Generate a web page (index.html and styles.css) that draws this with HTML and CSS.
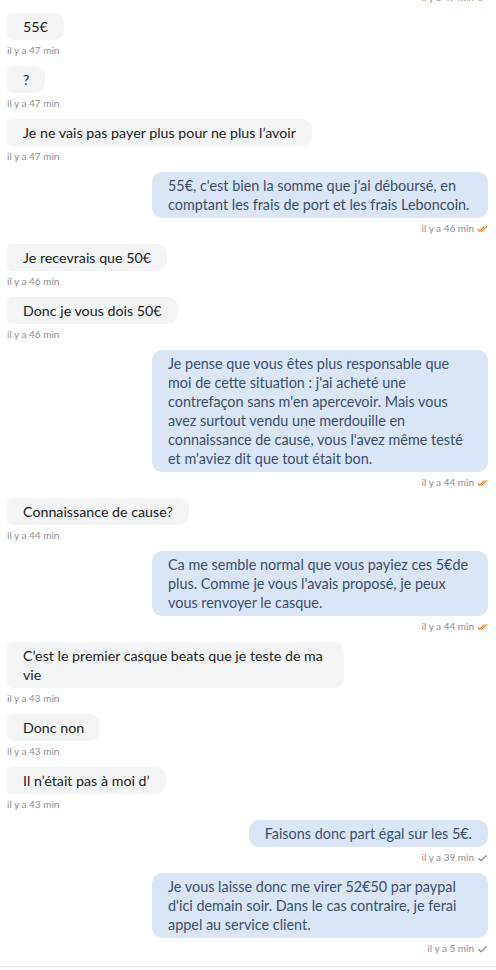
FILE: index.html
```html
<!DOCTYPE html>
<html lang="fr">
<head>
<meta charset="utf-8">
<link rel="stylesheet" href="styles.css">
</head>
<body>
<div class="chat">
  <div class="msg out first">
    <div class="meta">il y a 47 min <svg class="tick read" viewBox="0 0 12 8"><path d="M1 4.5 L3 6.5 L7.5 1.5 M5 6.5 L10.5 1.5"/></svg></div>
  </div>

  <div class="msg in"><div class="bubble">55€</div><div class="meta">il y a 47 min</div></div>
  <div class="msg in"><div class="bubble">?</div><div class="meta">il y a 47 min</div></div>
  <div class="msg in"><div class="bubble">Je ne vais pas payer plus pour ne plus l’avoir</div><div class="meta">il y a 47 min</div></div>

  <div class="msg out"><div class="bubble full">55€, c'est bien la somme que j'ai déboursé, en<br>comptant les frais de port et les frais Leboncoin.</div>
    <div class="meta">il y a 46 min <svg class="tick read" viewBox="0 0 12 8"><path d="M1 4.5 L3 6.5 L7.5 1.5 M5 6.5 L10.5 1.5"/></svg></div></div>

  <div class="msg in"><div class="bubble">Je recevrais que 50€</div><div class="meta">il y a 46 min</div></div>
  <div class="msg in"><div class="bubble">Donc je vous dois 50€</div><div class="meta">il y a 46 min</div></div>

  <div class="msg out"><div class="bubble full">Je pense que vous êtes plus responsable que<br>moi de cette situation : j'ai acheté une<br>contrefaçon sans m'en apercevoir. Mais vous<br>avez surtout vendu une merdouille en<br>connaissance de cause, vous l'avez même testé<br>et m'aviez dit que tout était bon.</div>
    <div class="meta">il y a 44 min <svg class="tick read" viewBox="0 0 12 8"><path d="M1 4.5 L3 6.5 L7.5 1.5 M5 6.5 L10.5 1.5"/></svg></div></div>

  <div class="msg in"><div class="bubble">Connaissance de cause?</div><div class="meta">il y a 44 min</div></div>

  <div class="msg out"><div class="bubble full">Ca me semble normal que vous payiez ces 5€de<br>plus. Comme je vous l'avais proposé, je peux<br>vous renvoyer le casque.</div>
    <div class="meta">il y a 44 min <svg class="tick read" viewBox="0 0 12 8"><path d="M1 4.5 L3 6.5 L7.5 1.5 M5 6.5 L10.5 1.5"/></svg></div></div>

  <div class="msg in"><div class="bubble full">C’est le premier casque beats que je teste de ma<br>vie</div><div class="meta">il y a 43 min</div></div>
  <div class="msg in"><div class="bubble">Donc non</div><div class="meta">il y a 43 min</div></div>
  <div class="msg in"><div class="bubble">Il n’était pas à moi d’</div><div class="meta">il y a 43 min</div></div>

  <div class="msg out"><div class="bubble">Faisons donc part égal sur les 5€.</div>
    <div class="meta">il y a 39 min <svg class="tick sent" viewBox="0 0 12 8"><path d="M2 4.5 L4.5 7 L10 1.5"/></svg></div></div>

  <div class="msg out"><div class="bubble full">Je vous laisse donc me virer 52€50 par paypal<br>d'ici demain soir. Dans le cas contraire, je ferai<br>appel au service client.</div>
    <div class="meta">il y a 5 min <svg class="tick sent" viewBox="0 0 12 8"><path d="M2 4.5 L4.5 7 L10 1.5"/></svg></div></div>
</div>
<div class="divider"></div>
</body>
</html>
```

FILE: styles.css
```css
html, body {
  margin: 0;
  padding: 0;
  background: #ffffff;
  overflow: hidden;
}
body {
  font-family: "Lato", "Open Sans", sans-serif;
  width: 496px;
  height: 970px;
}
.chat {
  display: flex;
  flex-direction: column;
  gap: 9px;
  padding: 0 8px 0 7px;
}
.msg {
  display: flex;
  flex-direction: column;
}
.msg.in { align-items: flex-start; }
.msg.out { align-items: flex-end; }
.msg.first { margin-top: -13px; }
.bubble {
  padding: 4px 16px;
  line-height: 19px;
  border-radius: 10px;
  white-space: nowrap;
}
.bubble.full {
  box-sizing: border-box;
}
.msg.in .bubble {
  background: #f3f4f6;
  color: #1c1c1c;
  font-size: 14.25px;
  border-radius: 5px 10px 10px 5px;
}
.msg.in .bubble.full { width: 337px; }
.msg.out .bubble {
  background: #dae6f6;
  color: #3a4f6e;
  font-size: 14.4px;
}
.msg.out .bubble.full { width: 336px; }
.meta {
  margin-top: 4px;
  height: 13px;
  font-size: 10px;
  line-height: 13px;
  color: #8a8e96;
  display: flex;
  align-items: center;
  gap: 3px;
}
.tick {
  width: 11px;
  height: 8px;
  fill: none;
  stroke-width: 1.3;
  stroke-linecap: round;
  stroke-linejoin: round;
}
.tick.read { stroke: #e8863a; }
.tick.sent { stroke: #8a8e96; }
.divider {
  margin-top: 11px;
  border-top: 1px solid #e6e7ea;
}
```
